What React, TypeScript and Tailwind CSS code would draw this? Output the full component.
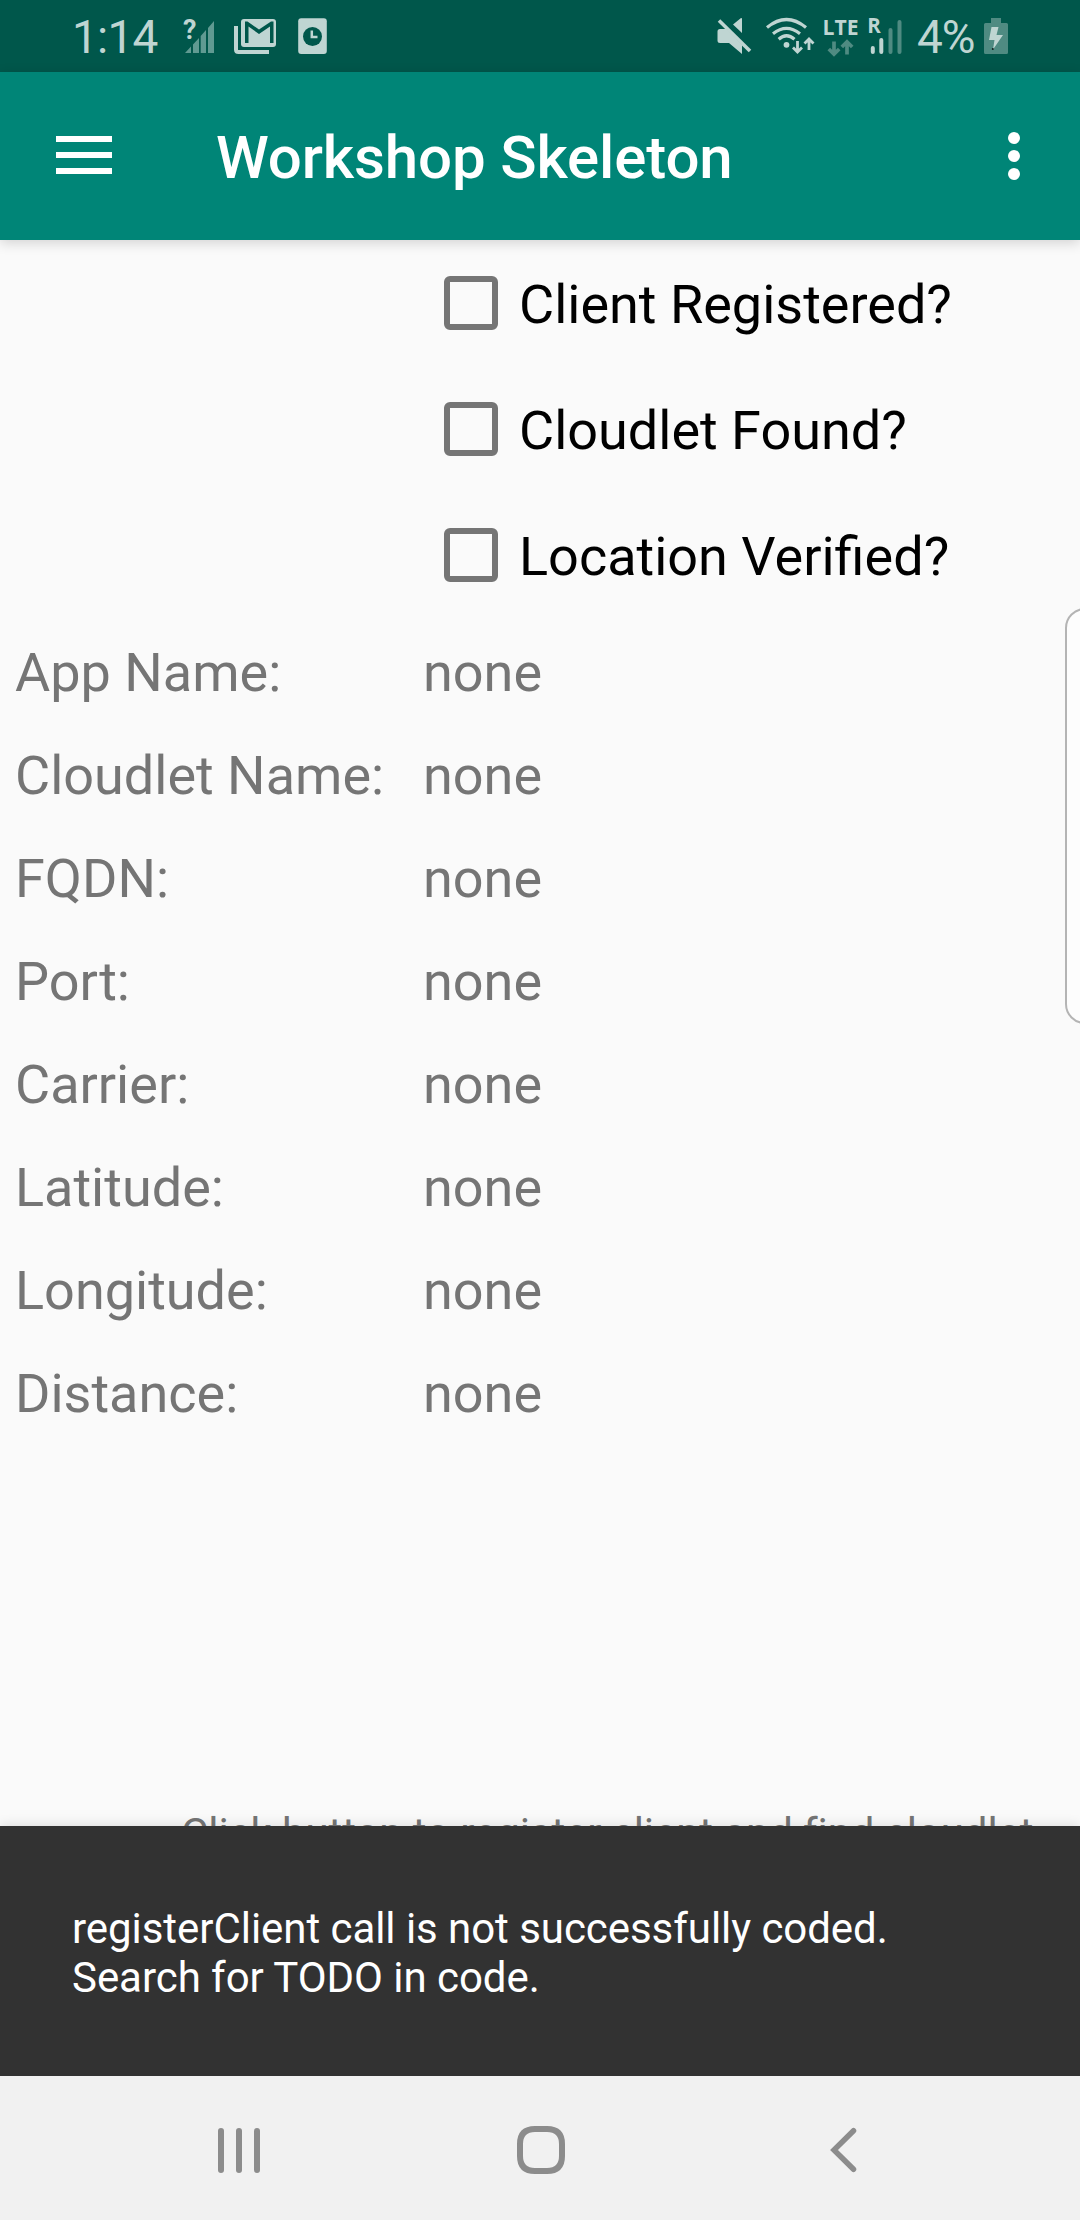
const LIGHT = "#bfd5d2";
const DIM = "#4f8b82";

function NoSignalIcon() {
  return (
    <svg className="h-[72px] w-[36px]" viewBox="180 0 36 72">
      <path d="M185 53 L191 46.5 V53 Z M193 44.5 L199 38 V53 H193 Z M200.700 36 L206 30 V53 H200.700 Z M208 28 L214 21 V53 H208 Z" fill="#609a92" />
      <text x="183" y="39" fontFamily="Roboto" fontWeight="700" fontSize="27" fill={LIGHT}>?</text>
    </svg>
  );
}

function MailIcon() {
  return (
    <svg className="h-[72px] w-[42px]" viewBox="234 0 42 72">
      <path d="M236 26 V49.500 Q236 52 238.500 52 H269" fill="none" stroke={LIGHT} strokeWidth="4" />
      <rect x="241" y="19" width="35" height="28" rx="3" fill={LIGHT} />
      <path d="M245 43 V21.500 H247.500 L259 29.500 L271 21.500 H273.500 V43 H270 V26.500 L259 34 L248.500 26.500 V43 Z" fill="#00574b" />
    </svg>
  );
}

function ClockCardIcon() {
  return (
    <svg className="h-[72px] w-[30px]" viewBox="298 0 30 72">
      <rect x="298.200" y="18.300" width="28.600" height="35.600" rx="3" fill={LIGHT} />
      <circle cx="312.500" cy="36.500" r="9.500" fill="#00574b" />
      <path d="M311.800 30.500 V37 H317.500" fill="none" stroke={LIGHT} strokeWidth="2.500" />
    </svg>
  );
}

function MuteIcon() {
  return (
    <svg className="h-[72px] w-[36px]" viewBox="716 0 36 72">
      <path d="M720 29 H726 L742 45 V54 L729 43 H720 Q717.500 43 717.500 40.500 V31.500 Q717.500 29 720 29 Z M733 24.500 L741 18 Q742 17.700 742 19 V33 Z" fill={LIGHT} />
      <path d="M719 20.500 L750 51" stroke={LIGHT} strokeWidth="3.600" />
    </svg>
  );
}

function WifiIcon() {
  return (
    <svg className="h-[72px] w-[50px]" viewBox="765 0 50 72" fill="none" stroke={LIGHT}>
      <path d="M767 27.500 Q786.500 11.500 806 27.500 M773 33.700 Q786.500 23 800 33.700 M778.700 39.200 Q786.500 32.300 794.500 39.200" strokeWidth="3.200" />
      <circle cx="786.500" cy="44.800" r="2.900" fill={LIGHT} stroke="none" />
      <path d="M797.500 41 V52 M793 47.500 L797.500 52 L802 47.500 M809 50 V39 M804.500 43.500 L809 39 L813.500 43.500" strokeWidth="2.800" />
    </svg>
  );
}

function LteIcon() {
  return (
    <svg className="h-[72px] w-[36px]" viewBox="823 0 36 72">
      <text x="822.500" y="34.700" fontFamily="Open Sans" fontWeight="700" fontSize="21.500" textLength="36" lengthAdjust="spacingAndGlyphs" fill={LIGHT}>LTE</text>
      <path d="M834 41.500 V54 M828.800 49 L834 54.200 L839.200 49 M847 54.500 V42 M841.800 47 L847 41.800 L852.200 47" fill="none" stroke={DIM} strokeWidth="3.700" />
    </svg>
  );
}

function RoamingIcon() {
  return (
    <svg className="h-[72px] w-[36px]" viewBox="868 0 36 72" strokeLinecap="round" strokeWidth="4">
      <text x="867.300" y="32.700" fontFamily="Open Sans" fontWeight="700" fontSize="20.500" fill={LIGHT}>R</text>
      <path d="M872.800 48 V52 M881.300 40 V52" stroke={LIGHT} />
      <path d="M890.500 30 V52 M899.500 22 V52" stroke={DIM} />
    </svg>
  );
}

function BatteryIcon() {
  return (
    <svg className="h-[72px] w-[24px]" viewBox="984 0 24 72">
      <path d="M991 18 H1001 V23 H1006.500 Q1008 23 1008 24.500 V52.500 Q1008 54 1006.500 54 H985.500 Q984 54 984 52.500 V24.500 Q984 23 985.500 23 H991 Z" fill={DIM} />
      <path d="M991.500 27 H998.500 L996.500 35 H1003 L993 49.500 L994.500 40 H989 Z" fill={LIGHT} />
      <circle cx="992.800" cy="49" r="1" fill="#10201e" />
    </svg>
  );
}

function StatusBar() {
  return (
    <header className="flex h-[72px] items-center bg-[#00574b] pr-[72px] pl-[72px] text-[#bfd5d2]">
      <span className="w-[108px] pt-[2px] text-[46px] leading-[72px] tracking-[-0.800px]">1:14</span>
      <NoSignalIcon />
      <div className="ml-[18px] flex"><MailIcon /></div>
      <div className="ml-[22px] flex"><ClockCardIcon /></div>
      <div className="ml-auto flex items-center">
        <MuteIcon />
        <div className="ml-[13px] flex"><WifiIcon /></div>
        <div className="ml-[8px] flex"><LteIcon /></div>
        <div className="ml-[9px] flex"><RoamingIcon /></div>
        <span className="ml-[13px] w-[67px] pt-[2px] text-[46px] leading-[72px] tracking-[-1.200px] whitespace-nowrap">4%</span>
        <BatteryIcon />
      </div>
    </header>
  );
}

function AppBar() {
  return (
    <div className="relative z-10 flex h-[168px] items-center bg-[#008577] pr-[60px] pl-[56px] text-white shadow-[0_3px_12px_rgba(0,0,0,0.16)]">
      <button className="mb-[2px] flex w-[56px] flex-col gap-[10px]">
        <span className="h-[6px] w-full bg-white" />
        <span className="h-[6px] w-full bg-white" />
        <span className="h-[6px] w-full bg-white" />
      </button>
      <h1 className="ml-[104px] pt-[4px] text-[60px] leading-[70px] font-medium tracking-[-0.120px]">Workshop Skeleton</h1>
      <button className="ml-auto flex flex-col gap-[6px]">
        <span className="size-[12px] rounded-full bg-white" />
        <span className="size-[12px] rounded-full bg-white" />
        <span className="size-[12px] rounded-full bg-white" />
      </button>
    </div>
  );
}

const checks = ["Client Registered?", "Cloudlet Found?", "Location Verified?"];
const fields = ["App Name:", "Cloudlet Name:", "FQDN:", "Port:", "Carrier:", "Latitude:", "Longitude:", "Distance:"];

export default function App() {
  return (
    <div className="relative flex h-[2220px] w-[1080px] flex-col overflow-hidden bg-[#fafafa] font-['Roboto',sans-serif]">
      <StatusBar />
      <AppBar />
      <main className="flex h-[1586px] flex-col overflow-hidden">
        <div className="flex flex-col pl-[444px]">
          {checks.map((label) => (
            <label key={label} className="flex h-[126px] items-center text-[54px] leading-[64px] text-black">
              <span className="size-[54px] rounded-[6px] border-[6px] border-[#757575]" />
              <span className="ml-[21px] pt-[4px]">{label}</span>
            </label>
          ))}
        </div>
        <dl className="mt-[3px] flex flex-col pl-[15px] text-[54px] text-[#757575]">
          {fields.map((label) => (
            <div key={label} className="flex h-[103px] items-center leading-[64px]">
              <dt className="w-[408px]">{label}</dt>
              <dd>none</dd>
            </div>
          ))}
        </dl>
        <p className="mt-auto h-[17px] pl-[181px] text-[42px] leading-[49px] tracking-[-0.080px] whitespace-nowrap text-[#757575]">
          Click button to register client and find cloudlet.
        </p>
      </main>
      <div className="relative flex h-[250px] flex-col justify-center bg-[#323232] px-[72px] pt-[4px] text-[42px] leading-[49px] tracking-[-0.050px] text-white shadow-[0_0_12px_rgba(0,0,0,0.14)]">
        <p>registerClient call is not successfully coded.</p>
        <p>Search for TODO in code.</p>
      </div>
      <nav className="relative flex h-[144px] items-center bg-[#f1f1f1]">
        <div className="mt-[4px] ml-[218px] flex gap-[12px]">
          <span className="h-[45px] w-[6px] rounded-full bg-[#8c8c8c]" />
          <span className="h-[45px] w-[6px] rounded-full bg-[#8c8c8c]" />
          <span className="h-[45px] w-[6px] rounded-full bg-[#8c8c8c]" />
        </div>
        <svg className="mt-[4px] ml-[257px] size-[48px]" viewBox="0 0 48 48">
          <path d="M18 3 H30 Q45 3 45 18 V30 Q45 45 30 45 H18 Q3 45 3 30 V18 Q3 3 18 3 Z" fill="none" stroke="#8c8c8c" strokeWidth="6" />
        </svg>
        <svg className="mt-[4px] ml-[264px] h-[48px] w-[30px]" viewBox="0 0 30 48">
          <path d="M24.500 4.700 L5 24 L24.500 43.300" fill="none" stroke="#8c8c8c" strokeWidth="5.500" strokeLinecap="round" />
        </svg>
      </nav>
      <aside className="absolute top-[608px] left-[1065px] z-20 h-[416px] w-[40px] rounded-[20px] border-[2px] border-[#b4b4b4] bg-[#fdfdfd]" />
    </div>
  );
}
